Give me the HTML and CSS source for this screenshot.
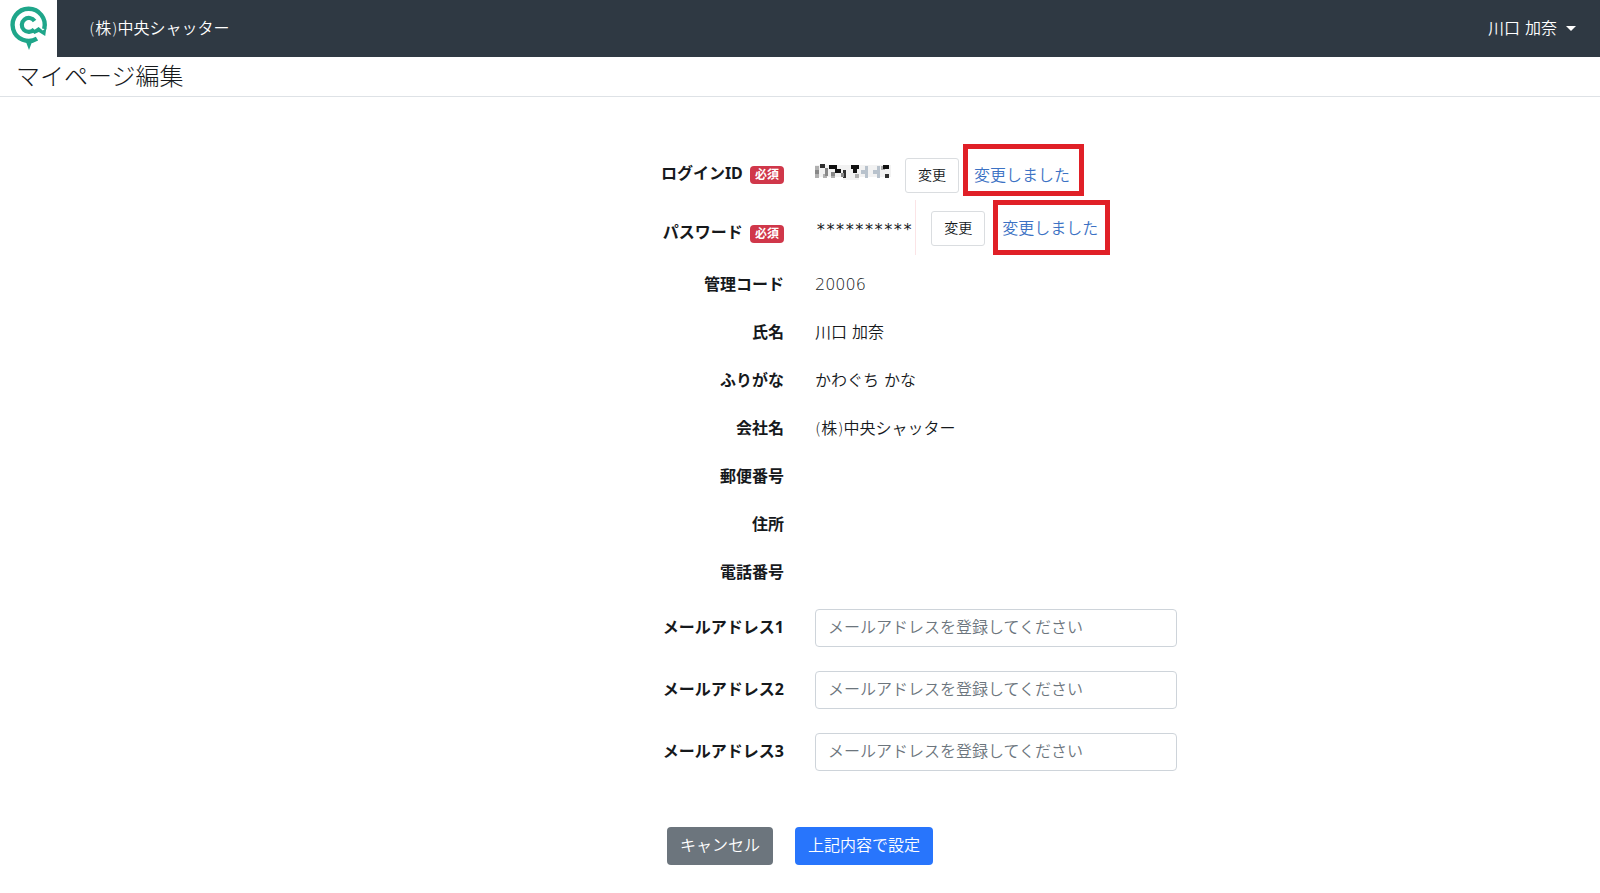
FILE: index.html
```html
<!DOCTYPE html>
<html lang="ja">
<head>
<meta charset="utf-8">
<title>マイページ編集</title>
<link rel="stylesheet" href="styles.css">
</head>
<body>
<header class="navbar">
  <a class="logo" href="#" aria-label="ホーム">
    <svg width="57" height="57" viewBox="0 0 57 57" fill="none" stroke="#1fa68a" stroke-width="4.4">
      <path d="M37 38.6A16.1 16.1 0 1 1 44.2 29"/>
      <path d="M34.6 21A7 7 0 1 0 34.2 29.4" stroke-width="4.2"/>
      <path d="M32 31.4l6.6-4.4 4.2 3.4 3.6-3-1.2 8.6-6.4-4-4.4 2z" fill="#1fa68a" stroke="none"/>
      <path d="M26 42h6l-3 8z" fill="#1fa68a" stroke="none"/>
    </svg>
  </a>
  <span class="company">(株)中央シャッター</span>
  <button class="user" type="button">川口 加奈<span class="caret"></span></button>
</header>
<h1 class="title">マイページ編集</h1>
<main>
  <form class="form">
    <div class="row row-login">
      <div class="label">ログインID <span class="badge">必須</span></div>
      <div class="value">
        <svg class="mosaic" width="76" height="20" viewBox="0 0 76 20" shape-rendering="crispEdges" role="img" aria-label="ログインID">
          <path fill="#f2f2f2" d="M0 4h76v12H0zM28 16h16v3H28z"/>
          <path fill="#b0b0b0" d="M0 5h4v4H0zM0 13h4v4H0zM8 13h4v4H8zM16 13h4v4h-4zM40 13h4v4h-4zM66 5h4v4h-4z"/>
          <path fill="#303030" d="M5 3h5v4H5zM28 9h3v8h-3zM70 13h4v4h-4z"/>
          <path fill="#111111" d="M14 4h8v4h-8zM20 8h6v4h-6zM36 4h8v4h-8zM38 8h4v4h-4zM68 4h6v4h-6z"/>
          <path fill="#888888" d="M0 9h4v4H0zM10 7h3v8h-3zM16 11h4v4h-4zM26 12h3v4h-3z"/>
          <path fill="#b8c2cc" d="M46 9h4v4h-4zM50 5h3v12h-3zM58 9h4v4h-4zM62 5h3v12h-3z"/>
        </svg>
        <button class="change" type="button">変更</button>
        <span class="notice">変更しました</span>
      </div>
    </div>
    <div class="row row-password">
      <div class="label">パスワード <span class="badge">必須</span></div>
      <div class="value">
        <span class="stars">**********</span>
        <button class="change" type="button">変更</button>
        <span class="notice">変更しました</span>
      </div>
    </div>
    <div class="row"><div class="label">管理コード</div><div class="value">20006</div></div>
    <div class="row"><div class="label">氏名</div><div class="value">川口 加奈</div></div>
    <div class="row"><div class="label">ふりがな</div><div class="value">かわぐち かな</div></div>
    <div class="row"><div class="label">会社名</div><div class="value">(株)中央シャッター</div></div>
    <div class="row"><div class="label">郵便番号</div><div class="value"></div></div>
    <div class="row"><div class="label">住所</div><div class="value"></div></div>
    <div class="row"><div class="label">電話番号</div><div class="value"></div></div>
    <div class="row row-mail"><label class="label" for="mail1">メールアドレス1</label><div class="value"><input id="mail1" type="email" placeholder="メールアドレスを登録してください"></div></div>
    <div class="row row-mail"><label class="label" for="mail2">メールアドレス2</label><div class="value"><input id="mail2" type="email" placeholder="メールアドレスを登録してください"></div></div>
    <div class="row row-mail"><label class="label" for="mail3">メールアドレス3</label><div class="value"><input id="mail3" type="email" placeholder="メールアドレスを登録してください"></div></div>
    <div class="actions">
      <button class="btn btn-cancel" type="button">キャンセル</button>
      <button class="btn btn-submit" type="submit">上記内容で設定</button>
    </div>
  </form>
</main>
</body>
</html>
```
FILE: styles.css
```css
* { box-sizing: border-box; }

body {
  margin: 0;
  background: #fff;
  color: #16191c;
  font-family: "DejaVu Sans", "Noto Sans CJK JP", sans-serif;
  font-size: 16px;
  font-weight: 350;
  line-height: 24px;
}

button, input { font: inherit; color: inherit; }

.navbar {
  display: flex;
  align-items: center;
  height: 57px;
  background: #2f3943;
  color: #fff;
}

.logo {
  display: block;
  height: 57px;
  margin-right: 32px;
  background: #fff;
}

.user {
  display: flex;
  align-items: center;
  gap: 9px;
  margin-left: auto;
  padding: 0 24px 0 0;
  border: 0;
  background: none;
}

.caret {
  border: 5px solid transparent;
  border-top-color: #fff;
  border-bottom: 0;
}

.title {
  margin: 0;
  padding: 5px 16px 4px;
  border-bottom: 1px solid #dee2e6;
  font-size: 24px;
  font-weight: 300;
  line-height: 30px;
}

.form { padding-top: 47px; }

.row {
  display: grid;
  grid-template-columns: 1fr 1fr;
  align-items: start;
}

.value { padding: 12px 15px; }

.label {
  padding: 11px 16px 13px;
  font-family: "Noto Sans", "Noto Sans CJK JP", sans-serif;
  font-weight: 700;
  text-align: right;
}

.row-login { margin-bottom: 4px; }
.row-password { margin-bottom: 6px; }
.row-login .label { padding: 17px 16px 0; }
.row-password .label { padding: 20px 16px 0; }

.row-login .value, .row-password .value {
  display: flex;
  align-items: flex-start;
  padding: 0 15px;
}

.badge {
  display: inline-block;
  margin-left: 3px;
  padding: 0 5px;
  border-radius: 4px;
  background: #d0374a;
  color: #fff;
  font-size: 12px;
  line-height: 18px;
}

.mosaic { margin: 17px 14px 0 0; }

.change {
  height: 35px;
  padding: 0 12px 2px;
  border: 1px solid #dadde0;
  border-radius: 3px;
  background: #fff;
  font-size: 14px;
}

.row-login .change { margin: 14px 4px 0 0; }
.row-password .change { margin: 11px 8px 0 15px; }

.notice {
  border: 5px solid #e02027;
  color: #3c72c4;
}

.row-login .notice { padding: 15px 9px 3px 6px; }
.row-password .notice { padding: 12px 7px 9px 4px; }

.stars {
  align-self: stretch;
  padding: 18px 3px 0 1px;
  border-right: 1px solid #fbe4e6;
  font-family: "DejaVu Sans Mono", monospace;
}

.row-mail { padding: 12px 0; }
.row-mail .label { padding: 6px 16px 8px; }
.row-mail .value { padding: 0 15px; }

.row-mail input {
  display: block;
  width: 47%;
  height: 38px;
  padding: 0 12px 2px;
  border: 1px solid #ced4da;
  border-radius: 4px;
  background: #fff;
}

.row-mail input::placeholder { color: #6c757d; opacity: 1; }

.actions {
  display: flex;
  justify-content: center;
  gap: 22px;
  padding: 44px 0 28px;
}

.btn {
  height: 38px;
  padding: 0 13px;
  border: 0;
  border-radius: 4px;
  color: #fff;
}

.btn-cancel { background: #6c757d; }
.btn-submit { background: #2875fc; }
```
